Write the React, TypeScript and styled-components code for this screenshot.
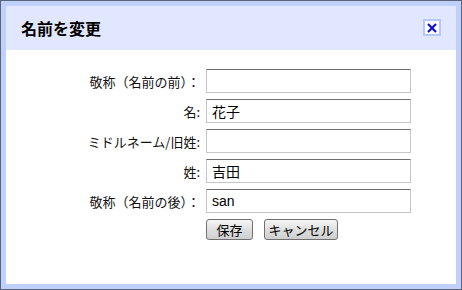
import React from "react";
import styled, { createGlobalStyle } from "styled-components";

const GlobalStyle = createGlobalStyle`
  html, body {
    margin: 0;
    padding: 0;
    background: #ffffff;
  }
  body {
    font-family: "Liberation Sans", "Noto Sans CJK JP", sans-serif;
  }
`;

const Dialog = styled.div`
  box-sizing: border-box;
  width: 462px;
  height: 290px;
  border: 1px solid #5b6476;
  background: #c0d0fc;
  padding: 5px;
  display: flex;
  flex-direction: column;
`;

const TitleBar = styled.div`
  height: 44px;
  background: #e0e7fe;
  display: flex;
  align-items: center;
  justify-content: space-between;
  padding: 0 15px 0 15px;
`;

const Title = styled.h1`
  margin: 0;
  font-family: "Noto Sans CJK JP", sans-serif;
  font-size: 16px;
  font-weight: bold;
  color: #000;
`;

const CloseButton = styled.button`
  box-sizing: border-box;
  width: 18px;
  height: 17px;
  padding: 0;
  margin-top: -1px;
  border: 2px solid #b6c8fb;
  background: #ffffff;
  display: flex;
  align-items: center;
  justify-content: center;
  cursor: pointer;
`;

const Body = styled.div`
  flex: 1;
  background: #ffffff;
  padding-top: 19px;
`;

const Form = styled.div`
  display: grid;
  grid-template-columns: 194px 205px;
  column-gap: 6px;
  row-gap: 6px;
  align-items: center;
`;

const Label = styled.label`
  text-align: right;
  font-family: "Noto Sans CJK JP", sans-serif;
  font-size: 13px;
  color: #111;
  white-space: nowrap;
`;

const Input = styled.input`
  box-sizing: border-box;
  width: 205px;
  height: 24px;
  margin: 0;
  padding: 0 5px;
  border: 1px solid #c6c6c6;
  border-top-color: #6e6e6e;
  font-family: "Liberation Sans", "Noto Sans CJK JP", sans-serif;
  font-size: 14px;
  color: #000;
  outline: none;
`;

const Buttons = styled.div`
  display: flex;
  gap: 11px;
`;

const Button = styled.button<{ $w: number }>`
  box-sizing: border-box;
  width: ${(p) => p.$w}px;
  height: 21px;
  padding: 0;
  border: 1px solid #707070;
  border-radius: 3px;
  background: linear-gradient(#f6f6f6, #dddddd 55%, #cfcfcf);
  font-family: "Noto Sans CJK JP", sans-serif;
  font-size: 13px;
  color: #000;
  line-height: 19px;
`;

const fields = [
  { label: "敬称（名前の前）：", value: "" },
  { label: "名:", value: "花子" },
  { label: "ミドルネーム/旧姓:", value: "" },
  { label: "姓:", value: "吉田" },
  { label: "敬称（名前の後）：", value: "san" },
];

export default function App() {
  return (
    <>
      <GlobalStyle />
      <Dialog>
        <TitleBar>
          <Title>名前を変更</Title>
          <CloseButton aria-label="閉じる">
            <svg width="10" height="10" viewBox="0 0 10 10">
              <path d="M1 1 L9 9 M9 1 L1 9" stroke="#1010d0" strokeWidth="2.2" />
            </svg>
          </CloseButton>
        </TitleBar>
        <Body>
          <Form>
            {fields.map((f) => (
              <React.Fragment key={f.label}>
                <Label>{f.label}</Label>
                <Input defaultValue={f.value} />
              </React.Fragment>
            ))}
            <span />
            <Buttons>
              <Button $w={47}>保存</Button>
              <Button $w={74}>キャンセル</Button>
            </Buttons>
          </Form>
        </Body>
      </Dialog>
    </>
  );
}
